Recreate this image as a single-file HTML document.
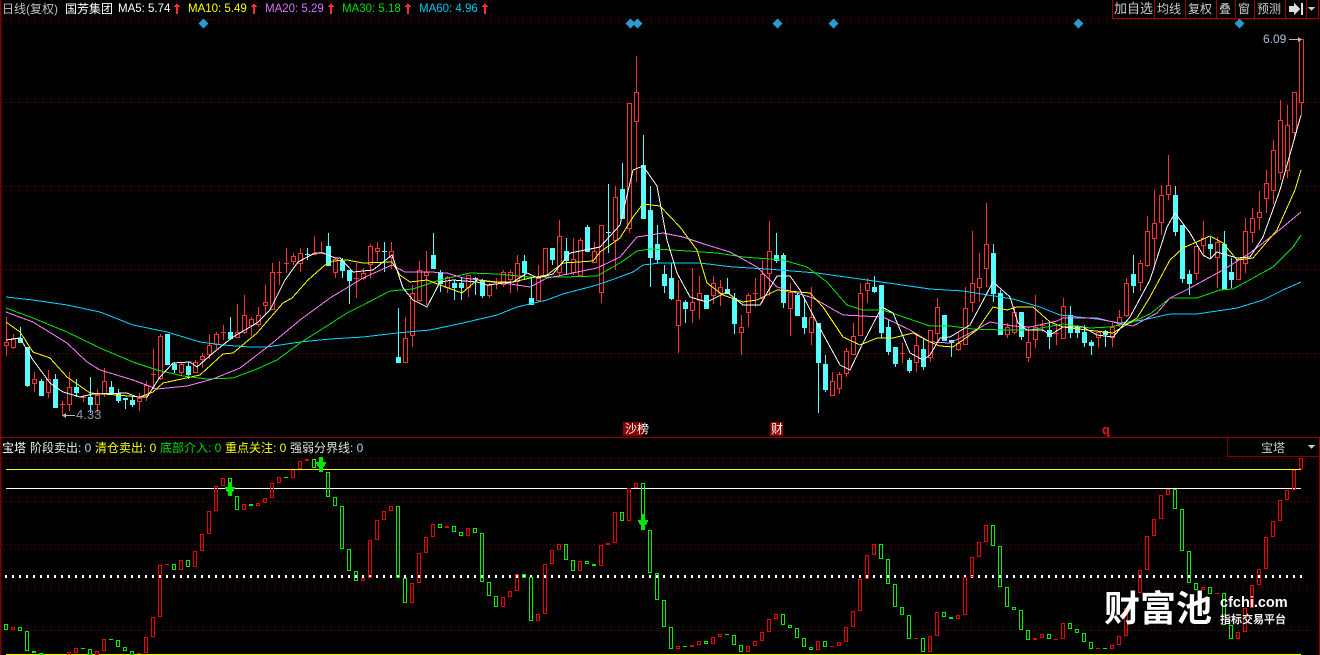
<!DOCTYPE html>
<html><head><meta charset="utf-8"><title>宝塔</title>
<style>
html,body{margin:0;padding:0;background:#000;width:1320px;height:655px;overflow:hidden}
#w{position:relative;width:1320px;height:655px;overflow:hidden;background:#000;font-family:"Liberation Sans","WenQuanYi Zen Hei","Noto Sans CJK SC",sans-serif;font-size:12px}
#w span{position:absolute;white-space:nowrap;line-height:14px}
svg{position:absolute;left:0;top:0}
</style></head><body><div id="w">
<svg id="s" width="1320" height="655" viewBox="0 0 1320 655" shape-rendering="crispEdges">
<g fill="none" stroke="#7a0000" stroke-dasharray="1 3">
<path d="M2 19.5H1320M2 102.5H1320M2 186.5H1320M2 269.5H1320M2 353.5H1320M2 458.5H1318M2 501.5H1318M2 544.5H1318M2 587.5H1318M2 630.5H1318"/>
</g>
<g id="main"></g>
<g fill="none" stroke-width="1">
<polyline stroke="#00d8ff" points="6,297 33,300 67,305 100,312 133,325 167,332 200,342 223,345 250,347 267,347 300,342 330,339 363,337 397,333 430,330 463,323 497,315 517,307 547,300 563,294 597,285 617,278 633,272 643,265 660,263 700,263 733,267 767,269 817,273 867,280 930,289 963,291 1013,299 1040,307 1060,315 1097,319 1120,323 1143,320 1170,314 1197,314 1237,308 1263,300 1283,290 1301,282"/>
<polyline stroke="#00e600" points="6,308 33,318 67,332 100,348 133,362 157,370 183,376 207,379 233,378 257,369 277,360 300,343 330,324 347,313 363,305 390,291 413,289 440,280 470,273 497,274 530,277 563,277 597,276 613,267 623,261 637,251 650,249 673,250 717,253 743,257 783,260 807,267 827,282 847,305 863,310 883,310 930,326 950,326 973,329 1003,330 1030,330 1063,324 1090,328 1110,327 1130,323 1150,314 1170,298 1197,298 1220,290 1233,289 1273,267 1293,247 1301,235"/>
<polyline stroke="#ff80ff" points="6,312 33,322 67,343 87,362 100,370 133,380 157,389 187,386 213,379 240,368 270,345 300,320 330,298 363,278 392,265 405,272 430,272 447,273 463,278 497,282 530,287 547,278 563,275 597,268 620,257 637,237 663,233 683,237 707,245 730,252 757,267 777,287 813,298 843,315 883,317 910,330 930,342 950,343 970,333 990,322 1013,326 1030,327 1057,321 1063,318 1097,318 1117,323 1133,326 1157,313 1170,298 1190,288 1223,270 1250,253 1277,232 1301,212"/>
<polyline stroke="#ffff00" points="6,322 20,332 33,352 50,358 67,377 90,393 117,395 140,397 153,392 163,383 200,375 223,354 233,353 257,333 283,303 292,298 308,280 325,265 333,261 347,260 363,263 392,262 400,275 410,282 427,280 440,285 462,293 477,280 493,282 513,282 530,278 547,275 563,263 593,261 600,252 620,238 633,217 643,204 660,206 680,227 697,250 707,283 723,295 743,302 757,300 777,290 810,293 823,307 843,337 860,345 877,338 893,338 913,333 930,342 940,346 953,347 977,330 993,307 1007,310 1017,307 1033,307 1050,322 1063,327 1087,330 1113,333 1137,318 1150,297 1170,260 1183,248 1210,236 1223,243 1237,260 1253,258 1277,230 1295,190 1301,170"/>
<polyline stroke="#ffffff" points="6,340 20,338 33,360 50,383 63,392 80,397 93,394 127,393 137,397 147,397 160,377 173,363 190,362 197,367 213,353 233,337 257,323 270,310 285,280 298,262 315,253 323,253 335,258 340,258 353,272 373,270 392,255 403,288 413,300 427,307 440,282 453,280 477,282 487,285 513,282 527,273 538,278 553,274 570,253 590,249 600,247 620,225 633,170 643,166 657,186 667,240 677,273 690,297 707,302 727,292 743,305 760,305 777,276 790,276 800,290 817,323 840,365 850,370 863,343 882,307 893,313 910,353 923,360 930,355 940,338 950,337 970,325 993,282 1010,297 1018,323 1027,330 1043,330 1050,335 1063,327 1083,327 1097,335 1113,337 1130,317 1150,280 1167,227 1175,213 1190,233 1203,255 1210,259 1217,252 1237,258 1250,257 1263,237 1280,190 1301,115"/>
</g>
<!-- borders -->
<path d="M0 0V655M1 0V655" stroke="#800000"/>
<path d="M0 437.5H1320M1319.5 437V655" stroke="#900000"/>
<path d="M1227.5 437V456.5H1320" fill="none" stroke="#800000"/>
<!-- diamonds -->
<g fill="#2a9bd0" shape-rendering="auto"><path d="M203.500 18.500l5 5-5 5-5-5zM630.500 18.500l5 5-5 5-5-5zM637.500 18.500l5 5-5 5-5-5zM777.500 18.500l5 5-5 5-5-5zM833.500 18.500l5 5-5 5-5-5zM1078.500 18.500l5 5-5 5-5-5zM1239.500 18.500l5 5-5 5-5-5z"/></g>
<!-- low/high arrows -->
<path d="M66 415.500H75" stroke="#bbb"/><path d="M62 415.500l4-2.500v5z" fill="#bbb"/>
<path d="M1289 39.500H1298" stroke="#bbb"/><path d="M1302 39.500l-4-2.500v5z" fill="#bbb"/>
<!-- indicator levels -->
<path d="M6 469.500H1301" stroke="#ffff00"/>
<path d="M6 488.500H1301" stroke="#ffffff"/>
<path d="M5 576.500H1302" stroke="#fff" stroke-width="3" stroke-dasharray="2 5"/>
<path d="M6 654.500H1301" stroke="#ffff00" stroke-width="1"/>
<g id="sub"></g>
<!-- arrows -->
<g fill="#00e600">
<path d="M228 482h4v5h3v2h-1v2h-1v1h-1v4h-4v-4h-1v-1h-1v-2h-1v-2h3z"/>
<path d="M319 457h4v5h3v2h-1v2h-1v1h-1v5h-4v-5h-1v-1h-1v-2h-1v-2h3z"/>
<path d="M641 514h4v6h3v2h-1v2h-1v1h-1v4h-4v-4h-1v-1h-1v-2h-1v-2h3z"/>
</g>
<path d="M623 422h20v14h-20zM770 422h13v14h-13z" fill="#8a0000"/>
<path d="M1107 435h3v2h-3z" fill="#900000"/>
<!-- top toolbar -->
<path d="M1112.500 0V18.500H1319.500M1154.500 0V18M1185.500 0V18M1216.500 0V18M1235.500 0V18M1254.500 0V18M1285.500 0V18M1306.500 0V18M1318.500 0V18" fill="none" stroke="#a00000"/>
<path d="M1289 6h5v-3l6 6-6 6v-3h-5zM1301 3h2v12h-2z" fill="#ddd"/>
<path d="M1308 7h7l-3.500 4z" fill="#ccc"/>
<path d="M1308 445h7l-3.500 4z" fill="#ccc"/>
</svg>

<span style="left:2px;top:2px;color:#c0c0c0">日线(复权)</span>
<span style="left:65px;top:2px;color:#fff">国芳集团</span>
<span style="left:118px;top:2px;color:#fff;font-size:11.500px">MA5: 5.74</span>
<span style="left:188px;top:2px;color:#ffff00;font-size:11.500px">MA10: 5.49</span>
<span style="left:265px;top:2px;color:#e070ff;font-size:11.500px">MA20: 5.29</span>
<span style="left:342px;top:2px;color:#00e000;font-size:11.500px">MA30: 5.18</span>
<span style="left:419px;top:2px;color:#00c8f0;font-size:11.500px">MA60: 4.96</span>
<svg width="1320" height="20" viewBox="0 0 1320 20" shape-rendering="crispEdges"><path fill="#ff3030" d="M176 3h1v1h1v1h1v1h1v1h-2v7h-2v-7h-2v-1h1v-1h1v-1h1zM253 3h1v1h1v1h1v1h1v1h-2v7h-2v-7h-2v-1h1v-1h1v-1h1zM330 3h1v1h1v1h1v1h1v1h-2v7h-2v-7h-2v-1h1v-1h1v-1h1zM407 3h1v1h1v1h1v1h1v1h-2v7h-2v-7h-2v-1h1v-1h1v-1h1zM484 3h1v1h1v1h1v1h1v1h-2v7h-2v-7h-2v-1h1v-1h1v-1h1z"/></svg>

<span style="left:1114px;top:2px;color:#ccc;font-size:13px">加自选</span>
<span style="left:1157px;top:2px;color:#ccc;font-size:12px">均线</span>
<span style="left:1188px;top:2px;color:#ccc;font-size:12px">复权</span>
<span style="left:1219px;top:2px;color:#ccc;font-size:12px">叠</span>
<span style="left:1238px;top:2px;color:#ccc;font-size:12px">窗</span>
<span style="left:1257px;top:2px;color:#ccc;font-size:12px">预测</span>

<span style="left:1263px;top:32px;color:#a8c0d8;font-size:12px">6.09</span>
<span style="left:76px;top:408px;color:#8a9aac;font-size:13px">4.33</span>

<span style="left:625px;top:422px;color:#fff;font-size:12px">沙榜</span>
<span style="left:771px;top:422px;color:#fff;font-size:12px">财</span>
<span style="left:1102px;top:423px;color:#e81010;font-size:13px;font-weight:bold">q</span>

<span style="left:2px;top:441px;color:#fff">宝塔</span>
<span style="left:30px;top:441px;color:#e8e8e8">阶段卖出: <span style="position:static;color:#b0d0ff">0</span></span>
<span style="left:95px;top:441px;color:#ffff00">清仓卖出: <span style="position:static">0</span></span>
<span style="left:160px;top:441px;color:#00e000">底部介入: <span style="position:static">0</span></span>
<span style="left:225px;top:441px;color:#ffff00">重点关注: <span style="position:static">0</span></span>
<span style="left:290px;top:441px;color:#e0e0e0">强弱分界线: <span style="position:static;color:#b0d0ff">0</span></span>
<span style="left:1261px;top:441px;color:#ccc">宝塔</span>

<span style="left:1104px;top:590px;color:#fff;font-family:'Liberation Sans','Noto Sans CJK SC',sans-serif;font-weight:700;font-size:36px;line-height:38px">财富池</span>
<span style="left:1220px;top:596px;color:#fff;font-weight:bold;font-size:14.500px">cfchi.com</span>
<span style="left:1220px;top:613px;color:#eee;font-family:'Liberation Sans','Noto Sans CJK SC',sans-serif;font-weight:700;font-size:11px">指标交易平台</span>

<script>
var T="r342,345,317,356 r338,347,334,349 c338,342,327,342 c347,385,347,387 r379,383,372,392 c381,395,379,396 r379,392,370,398 c379,407,374,407 r404,404,401,416 r387,404,372,411 c387,392,379,397 r397,397,395,402 c397,404,377,413 r395,404,389,413 r381,393,368,397 c387,392,381,393 c393,400,389,403 c398,399,398,409 c400,404,397,407 r398,401,393,411 r385,395,381,401 r374,374,349,389 r336,378,334,380 c334,364,334,364 c364,369,362,373 r364,372,362,375 c366,374,362,379 r362,372,360,372 r356,359,353,368 r345,354,334,359 r334,344,332,349 r332,332,325,340 c332,338,317,340 r332,337,304,338 r315,332,295,334 r319,325,317,336 r315,324,307,327 r302,305,285,315 r272,309,263,309 r272,272,261,285 r263,263,248,273 r256,261,253,265 r253,263,248,272 c254,254,248,260 r253,254,236,255 r252,252,242,253 c246,265,233,265 r259,272,258,278 c261,270,258,278 c270,280,270,304 r278,278,263,298 r273,278,268,280 r246,264,244,278 r248,251,242,261 c251,251,242,272 r251,257,242,269 c357,362,308,362 r338,362,317,362 r293,335,285,347 r270,300,261,302 r272,275,251,305 c255,268,233,268 c272,283,270,292 r277,287,276,293 c283,287,280,300 c283,287,278,300 r275,287,275,297 c278,278,277,295 c281,295,279,298 r285,295,283,298 r282,282,278,289 r272,284,270,287 r272,279,270,293 r263,281,255,291 c261,272,255,280 c298,304,278,304 r278,300,265,302 r248,275,248,278 c248,259,248,265 r236,272,220,277 c251,260,238,275 r259,272,238,275 r240,275,238,275 c227,251,225,251 r251,262,242,262 r225,292,225,303 c232,232,184,253 r197,240,186,270 c189,218,163,218 r103,228,103,233 r92,121,56,182 c165,218,135,218 c210,257,186,287 c244,259,225,263 c274,285,265,293 c278,298,263,300 r300,325,280,353 c302,308,300,323 r302,310,268,323 r293,300,276,319 c295,308,295,308 r283,295,276,304 r287,293,280,306 c289,293,278,293 c298,323,293,334 r327,332,315,355 r295,312,293,327 r293,293,278,307 r274,298,260,303 r251,273,221,296 c255,260,233,263 c255,302,253,308 r292,308,283,336 c295,315,293,315 c317,327,298,334 r317,332,287,345 c323,362,323,413 c364,389,355,392 r381,395,372,395 r374,388,372,394 r351,373,348,377 r336,354,323,354 r293,335,283,335 r283,290,278,303 c287,291,276,293 c285,332,285,338 c327,351,320,355 c347,363,347,367 r353,353,343,363 c360,370,358,373 r345,362,333,372 c349,366,339,370 r330,357,330,362 r307,333,298,343 c315,340,315,340 c340,342,340,357 r343,349,333,351 r308,344,287,345 r283,302,231,312 r278,287,253,302 r244,268,203,287 c253,293,244,302 c293,334,290,334 r327,334,323,338 r312,332,306,334 c312,336,312,340 r342,357,327,362 r327,339,295,348 r325,325,320,332 c330,336,323,349 r333,333,325,345 r306,338,298,338 c315,332,306,338 c326,332,325,338 c332,342,325,347 c342,345,340,355 r332,337,331,348 c331,334,330,347 r327,337,323,347 r317,324,310,327 r283,315,278,317 c274,285,255,293 r263,282,260,291 r231,265,216,267 r223,238,190,267 r195,222,185,235 r185,194,155,200 c195,231,186,236 c225,278,225,283 c274,283,270,295 r246,273,246,280 r238,245,221,257 c244,248,237,258 r242,257,237,288 c244,289,231,289 c272,279,258,288 r259,279,258,279 r231,263,218,273 r218,232,208,243 r212,217,191,230 r183,198,170,213 r150,190,140,204 r120,172,100,180 r125,170,105,178 r92,132,92,140 r39,102,39,115";
var S="g568,584 r577,583 g577,586 g589,647 g649,652 g655,658 x x x r652,660 r640,652 g640,640 g643,658 r649,658 r613,646 g613,613 g616,635 g637,646 g649,658 r655,655 r607,652 r547,604 r391,544 r388,388 g388,403 r376,403 g376,394 r349,394 r298,346 r229,295 r154,226 r130,151 g130,180 g184,223 r208,223 g208,211 r205,211 r190,202 r145,187 r127,142 g127,127 r106,127 r79,100 r73,76 g73,98 g100,110 g112,184 g187,211 g214,340 g343,406 g409,436 r430,436 r316,427 r256,313 r229,253 r214,226 g214,427 g430,502 r445,502 r355,442 r307,352 r268,304 g268,277 r274,277 g274,289 g292,301 r280,301 g280,292 g295,439 g442,481 g484,514 r487,514 r469,484 r418,466 g418,426 g427,556 r538,556 r388,535 r346,385 r328,343 g328,373 g376,406 r379,406 g379,385 g388,391 r331,391 r325,328 r232,322 g232,256 r160,256 r145,157 g145,283 g286,412 g415,493 g496,574 g577,640 r634,640 g634,634 r631,634 r619,628 g619,625 r607,625 r598,604 g598,598 g601,628 g631,649 r634,649 r619,631 r592,616 r553,589 r538,550 g538,568 g571,577 g580,607 g610,634 g637,643 r619,643 g619,634 r634,634 r622,631 r577,619 r529,574 r433,526 r361,430 r328,358 g328,370 g373,445 g448,514 g517,538 g541,610 r610,610 g610,649 r604,649 r532,601 g532,544 g547,550 r541,550 r427,538 r367,424 r322,364 r271,319 g271,331 g334,454 g457,514 g517,523 g526,583 g586,613 r610,613 r598,607 g598,610 r613,613 r565,610 g565,580 g583,592 g595,619 g622,640 r640,640 g640,640 r631,640 r604,628 r520,601 r480,517 r406,472 r304,403 r253,301 r181,250 r163,178 g163,220 g223,346 g349,442 g445,463 r457,463 g457,475 r475,475 g475,568 g571,610 r592,610 r520,589 r451,517 r403,448 r307,400 r259,304 r196,256 r166,193 r106,163 r70,100";
var rp='',cp='',cw='';
T.split(' ').forEach(function(t,i){
 var c=t[0],a=t.slice(1).split(',').map(Number),x=4+7*i,m=x+2.5;
 if(c=='r'){
  if(a[0]==a[1]) rp+='M'+x+' '+(a[0]+.5)+'h5';
  else rp+='M'+(x+.5)+' '+(a[0]+.5)+'h4V'+(a[1]+.5)+'h-4z';
  rp+='M'+m+' '+a[2]+'V'+a[0]+'M'+m+' '+a[1]+'V'+a[3];
 }else{
  cp+='M'+x+' '+a[0]+'h5V'+(a[1]+1)+'h-5z';
  cw+='M'+m+' '+a[2]+'V'+a[3];
 }
});
document.getElementById('main').innerHTML='<path d="'+cw+'" stroke="#54ffff" fill="none"/><path d="'+cp+'" fill="#54ffff"/><path d="'+rp+'" stroke="#ff3232" fill="none"/>';
var sr='',sg='';
S.split(' ').forEach(function(t,i){
 if(t=='x')return;
 var c=t[0],a=t.slice(1).split(',').map(Number),x=4.5+7*i,
 p=Math.floor(435+a[0]/3)+.5,q=Math.floor(435+a[1]/3)+.5,
 d=(p==q)?('M'+(x-.5)+' '+p+'h4'):('M'+x+' '+p+'h3V'+q+'h-3z');
 if(c=='r')sr+=d;else sg+=d;
});
document.getElementById('sub').innerHTML='<path d="'+sr+'" stroke="#f00000" fill="none"/><path d="'+sg+'" stroke="#00f000" fill="none"/>';
</script>
</div></body></html>
